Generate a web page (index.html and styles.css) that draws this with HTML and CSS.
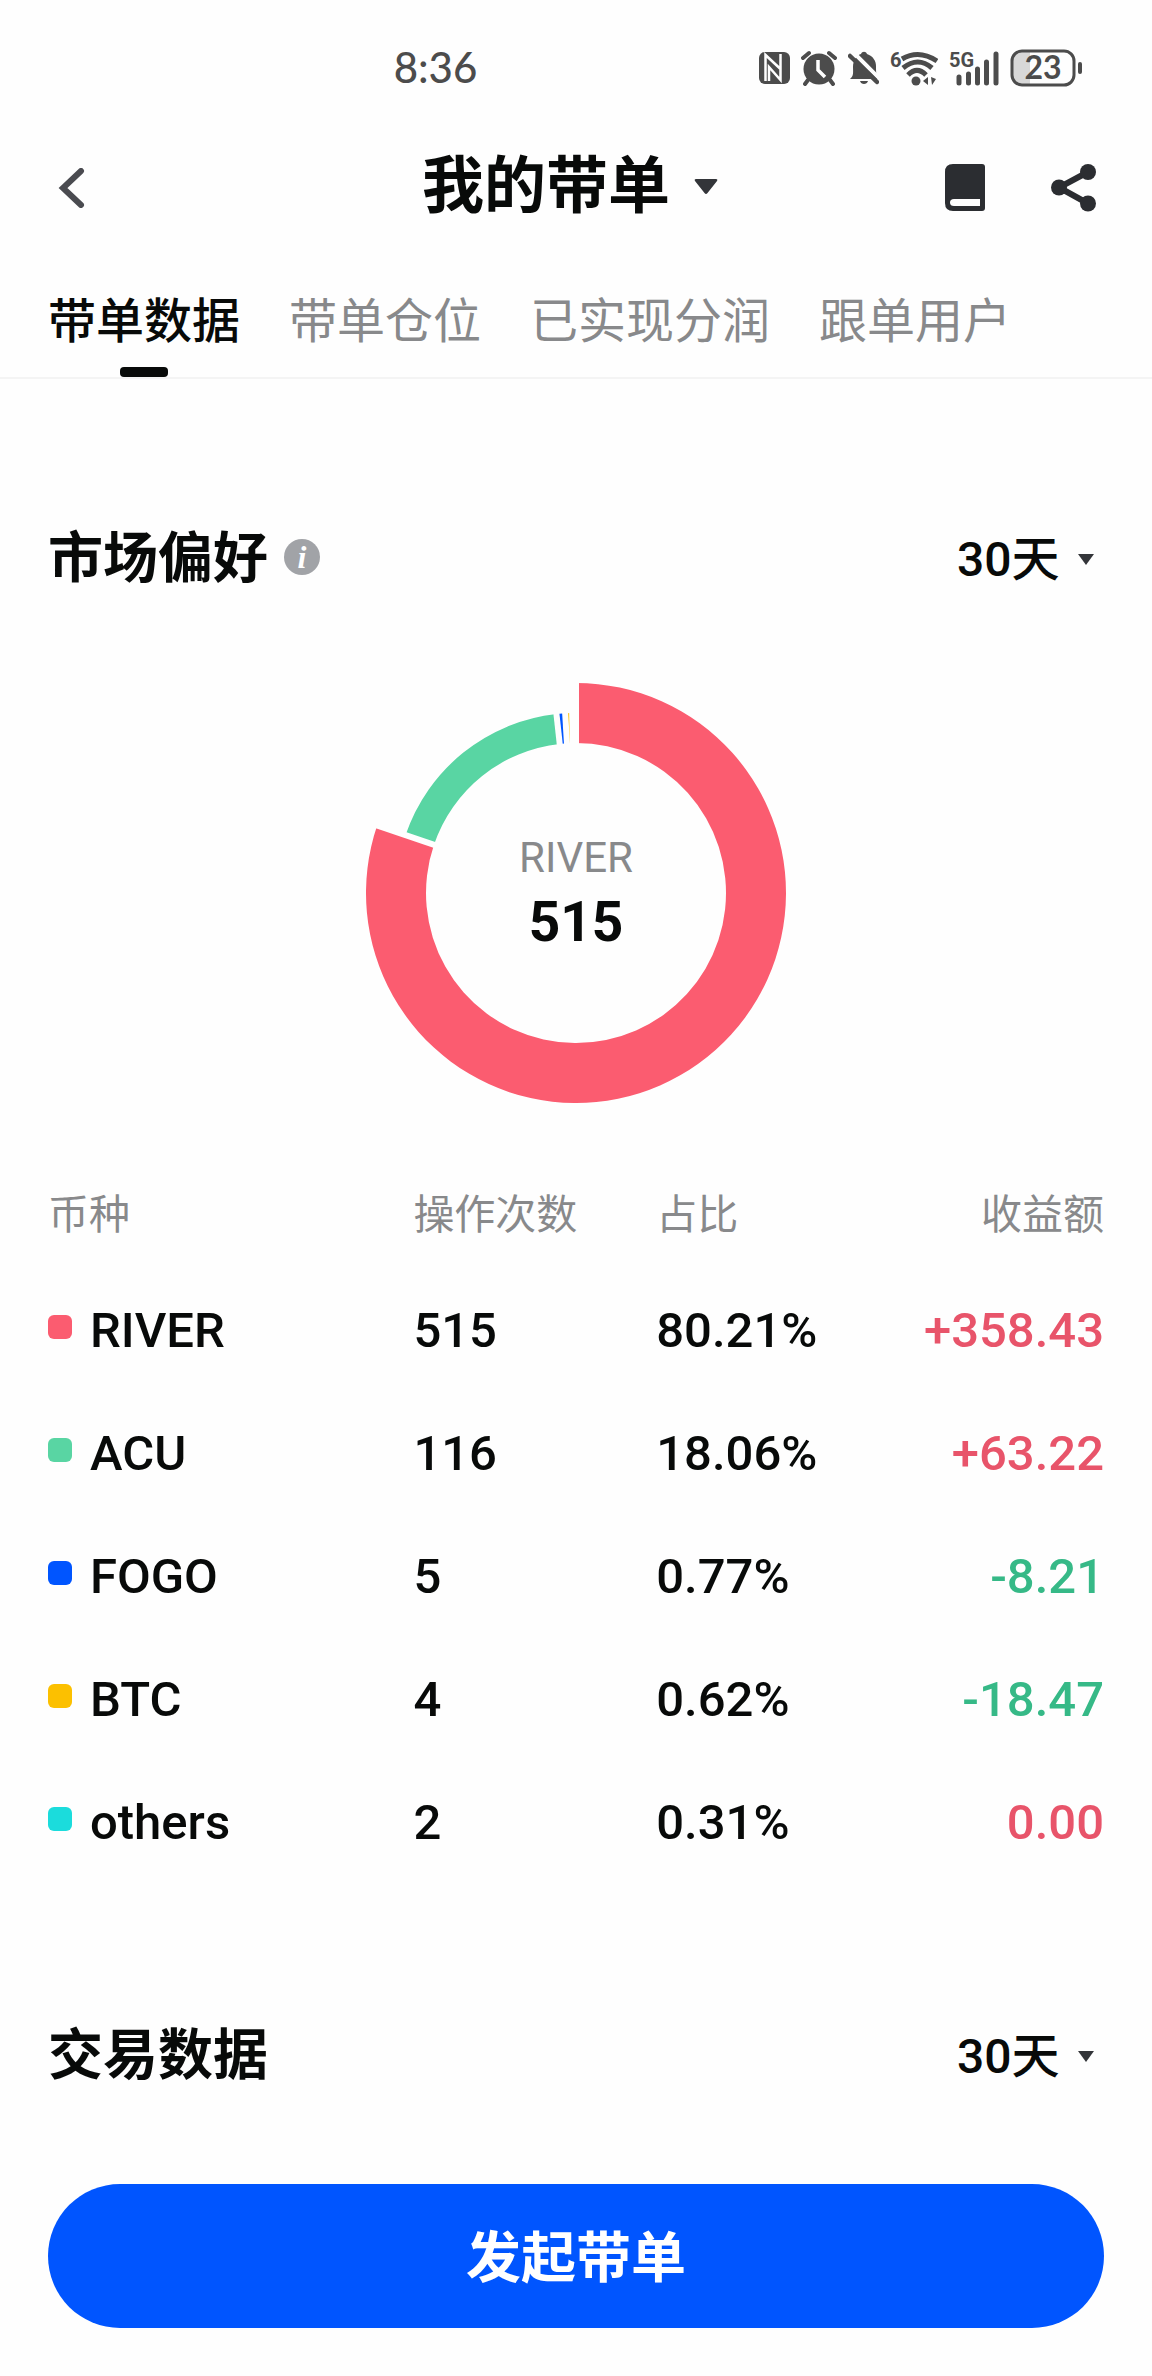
FILE: index.html
```html
<!DOCTYPE html>
<html lang="zh-CN">
  <head>
    <meta charset="UTF-8">
    <meta name="viewport" content="width=device-width, initial-scale=1.0">
    <title>我的带单</title>
    <link rel="stylesheet" href="styles.css">
  </head>
  <body>
    <div class="status-bar">
      <span class="status-time">8:36</span>
      <div class="status-icons">
        <!-- nfc -->
        <svg width="31" height="36" viewBox="0 0 31 36">
          <rect x="0" y="2" width="31" height="32" rx="6" fill="#4c4c4c" />
          <path d="M6.500 31V5l15 14M21.500 4v26L10 17v14" fill="none" stroke="#fefefe" stroke-width="2.500" />
        </svg>
        <!-- alarm -->
        <svg width="36" height="36" viewBox="0 0 36 36">
          <circle cx="18" cy="19" r="15.500" fill="#4c4c4c" />
          <path d="M2 8l6-5M28 3l6 5M7 30l-3 4M29 30l3 4" fill="none" stroke="#4c4c4c" stroke-width="4" stroke-linecap="round" />
          <path d="M17 10v10l7 7" fill="none" stroke="#fefefe" stroke-width="3.500" />
        </svg>
        <!-- muted bell -->
        <svg width="31" height="36" viewBox="0 0 31 36">
          <path d="M2 29c4-3 3-7 3-12C5 10 9 5 13 4c1-3 5-3 6 0 6 2 9 7 9 12 0 6 0 10 3 13zM12 31h8c-1 4-7 4-8 0z" fill="#4c4c4c" />
          <path d="M1 -2L34 31" stroke="#fefefe" stroke-width="4" />
          <path d="M2 6l27 26" stroke="#4c4c4c" stroke-width="4.500" stroke-linecap="round" />
        </svg>
        <!-- wifi 6 -->
        <svg width="48" height="42" viewBox="0 -3 48 42">
          <text class="tiny-label" x="0" y="17">6</text>
          <g fill="none" stroke="#4c4c4c" stroke-width="5">
            <path d="M12 9Q29-1 47 11" />
            <path d="M13 18Q28 6 42 18" />
            <path d="M18 25Q27 16 36 25" />
          </g>
          <circle cx="26" cy="31" r="4.500" fill="#4c4c4c" />
          <path d="M38 27v8l-5-4zM41 27l5 2-4 6z" fill="#4c4c4c" />
        </svg>
        <!-- 5G signal -->
        <svg width="50" height="42" viewBox="0 -3 50 42">
          <text class="tiny-label" x="0" y="17">5G</text>
          <path d="M10 27v6M19.500 24v9M28.500 19v14M37.500 12v21M47 4v29" stroke="#4c4c4c" stroke-width="5" stroke-linecap="round" />
        </svg>
        <!-- battery -->
        <svg width="74" height="46" viewBox="0 -4 74 46">
          <path d="M20 2v34H12C5 36 2 32 2 27V11C2 5 6 2 12 2z" fill="#d8d8d8" />
          <rect x="2" y="2" width="62" height="34" rx="10" fill="none" stroke="#4c4c4c" stroke-width="3" />
          <rect x="68" y="13" width="4" height="12" rx="2" fill="#4c4c4c" />
          <text class="battery-label" x="33" y="30">23</text>
        </svg>
      </div>
    </div>

    <header class="header">
      <button class="icon-btn" aria-label="返回">
        <svg width="30" height="40" viewBox="0 0 30 40">
          <path d="M26 3L8 20l18 17" fill="none" stroke="#4a4b50" stroke-width="6" stroke-linecap="round" />
        </svg>
      </button>
      <h1 class="title">
        <button class="title-btn">
          我的带单
          <svg width="24" height="16" viewBox="0 0 24 16">
            <path d="M2 0h20q2 0 1 2L13.500 14q-1.500 2-3 0L1 2q-1-2 1-2z" fill="#333539" />
          </svg>
        </button>
      </h1>
      <div class="header-actions">
        <button class="icon-btn" aria-label="教程">
          <svg width="40" height="48" viewBox="0 0 40 48">
            <path d="M8 0h29q3 0 3 3v41q0 3-3 3H8q-8 0-8-8V8q0-8 8-8z" fill="#2b2d31" />
            <path d="M35 35v7H9q-4 0-4-3.500T9 35z" fill="#fefefe" />
          </svg>
        </button>
        <button class="icon-btn" aria-label="分享">
          <svg width="46" height="48" viewBox="0 0 46 48">
            <path d="M37 8L8 23.500 37 39.500" fill="none" stroke="#2b2d31" stroke-width="6" />
            <circle cx="8" cy="23.500" r="8" fill="#2b2d31" />
            <circle cx="37" cy="8" r="8" fill="#2b2d31" />
            <circle cx="37" cy="39.500" r="8" fill="#2b2d31" />
          </svg>
        </button>
      </div>
    </header>

    <nav class="tabs">
      <a class="tab active" href="#data">带单数据</a>
      <a class="tab" href="#positions">带单仓位</a>
      <a class="tab" href="#profit">已实现分润</a>
      <a class="tab" href="#followers">跟单用户</a>
    </nav>

    <main class="content" id="data">
      <section class="preference">
        <div class="section-head">
          <h2>市场偏好</h2>
          <button class="info-btn" aria-label="说明">i</button>
          <label class="period">
            <select aria-label="市场偏好时间范围">
              <option>30天</option>
              <option>90天</option>
            </select>
            <svg width="16" height="11" viewBox="0 0 16 11">
              <path d="M0 0h16L8 11z" fill="#333539" />
            </svg>
          </label>
        </div>

        <div class="chart">
          <svg width="420" height="420" viewBox="0 0 420 420">
            <path d="M210 0A210 210 0 1 1 11.150 142.480L67.970 161.770A150 150 0 1 0 210 60z" fill="#fb5c70" />
            <path d="M39.560 152.120A180 180 0 0 1 190.470 31.060L193.730 60.890A150 150 0 0 0 67.970 161.770z" fill="#59d5a3" />
            <path d="M190.470 31.060L199.150 30.330 200.960 60.270 193.730 60.890z" fill="#0055ff" />
            <path d="M199.150 30.330L206.160 30.040 206.800 60.030 200.960 60.270z" fill="#fcc000" />
            <!-- gaps between the slices -->
            <g stroke="#fefefe" stroke-width="6">
              <path d="M210 65V-5" />
              <path d="M72.700 163.380L6.420 140.870" />
              <path d="M194.270 65.860L189.930 26.090" />
              <path d="M201.260 65.260L198.850 25.340" />
              <path d="M206.900 65.030L206.050 25.040" />
            </g>
          </svg>
          <div class="chart-label">
            <span class="chart-name">RIVER</span>
            <strong class="chart-value">515</strong>
          </div>
        </div>

        <table class="coins">
          <thead>
            <tr>
              <th class="col-coin">币种</th>
              <th class="col-count">操作次数</th>
              <th class="col-share">占比</th>
              <th class="col-profit">收益额</th>
            </tr>
          </thead>
          <tbody>
            <tr>
              <td><div class="coin"><span class="dot red"></span>RIVER</div></td>
              <td>515</td>
              <td>80.21%</td>
              <td class="up">+358.43</td>
            </tr>
            <tr>
              <td><div class="coin"><span class="dot green"></span>ACU</div></td>
              <td>116</td>
              <td>18.06%</td>
              <td class="up">+63.22</td>
            </tr>
            <tr>
              <td><div class="coin"><span class="dot blue"></span>FOGO</div></td>
              <td>5</td>
              <td>0.77%</td>
              <td class="down">-8.21</td>
            </tr>
            <tr>
              <td><div class="coin"><span class="dot yellow"></span>BTC</div></td>
              <td>4</td>
              <td>0.62%</td>
              <td class="down">-18.47</td>
            </tr>
            <tr>
              <td><div class="coin"><span class="dot cyan"></span>others</div></td>
              <td>2</td>
              <td>0.31%</td>
              <td class="up">0.00</td>
            </tr>
          </tbody>
        </table>
      </section>

      <section class="trading">
        <div class="section-head">
          <h2>交易数据</h2>
          <label class="period">
            <select aria-label="交易数据时间范围">
              <option>30天</option>
              <option>90天</option>
            </select>
            <svg width="16" height="11" viewBox="0 0 16 11">
              <path d="M0 0h16L8 11z" fill="#333539" />
            </svg>
          </label>
        </div>
      </section>

      <button class="start-btn">发起带单</button>
    </main>
  </body>
</html>
```

FILE: styles.css
```css
:root {
  --bg-color: #fefefe;
  --text-color: #080a09;
  --muted-color: #88898b;
  --status-color: #4c4c4c;
  --primary-color: #0055ff;
  --up-color: #e8546a;
  --down-color: #36b987;
}

* {
  box-sizing: border-box;
}

body {
  margin: 0;
  background-color: var(--bg-color);
  color: var(--text-color);
  font-family: Roboto, "Noto Sans CJK SC", sans-serif;
  font-size: 48px;
}

svg {
  display: block;
  flex-shrink: 0;
}

button,
select {
  margin: 0;
  padding: 0;
  border: none;
  background: none;
  color: inherit;
  font: inherit;
  cursor: pointer;
}

/* status bar */
.status-bar {
  display: flex;
  justify-content: space-between;
  align-items: center;
  height: 136px;
  padding: 0 68px 0 34%;
  color: var(--status-color);
}

.status-time {
  padding: 0 0 2px 2px;
  font-family: Lato, sans-serif;
  font-size: 42px;
  font-weight: 500;
}

.status-icons {
  display: flex;
  align-items: center;
  gap: 11px;
}

.tiny-label {
  font-size: 20px;
  font-weight: 700;
  fill: var(--status-color);
}

.battery-label {
  font-family: Lato, sans-serif;
  font-size: 32px;
  font-weight: 700;
  text-anchor: middle;
  fill: var(--status-color);
}

/* header */
.header {
  display: grid;
  grid-template-columns: 1fr auto 1fr;
  align-items: center;
  height: 104px;
  padding: 0 55px;
}

.title {
  margin: 0;
  font-size: 62px;
  font-weight: 700;
  line-height: 64px;
}

.title-btn {
  display: flex;
  align-items: center;
  gap: 24px;
  padding: 0 12px 2px 0;
}

.icon-btn {
  justify-self: start;
}

.header-actions {
  display: flex;
  justify-content: flex-end;
  gap: 66px;
}

/* tabs */
.tabs {
  display: flex;
  gap: 49px;
  padding: 54px 48px 0;
  border-bottom: 2px solid #f4f4f4;
}

.tab {
  position: relative;
  padding-bottom: 27px;
  color: var(--muted-color);
  line-height: 56px;
  text-decoration: none;
  white-space: nowrap;
}

.tab.active {
  color: var(--text-color);
  font-weight: 500;
}

.tab.active::after {
  content: "";
  position: absolute;
  bottom: 0;
  left: 50%;
  width: 48px;
  height: 10px;
  margin-left: -24px;
  border-radius: 4px;
  background-color: var(--text-color);
}

/* content */
.content {
  padding: 0 48px 48px;
}

.preference {
  padding-top: 148px;
}

.trading {
  padding-top: 140px;
}

.section-head {
  display: flex;
  align-items: center;
  height: 64px;
}

.section-head h2 {
  margin: 0 0 2px;
  font-size: 55px;
  font-weight: 700;
  line-height: 64px;
}

.info-btn {
  width: 36px;
  height: 36px;
  margin: 0 0 4px 16px;
  border-radius: 50%;
  background-color: #a1a3a7;
  color: #fff;
  font-family: "Liberation Serif", serif;
  font-size: 32px;
  font-style: italic;
  font-weight: 700;
  line-height: 34px;
}

.period {
  display: flex;
  align-items: center;
  gap: 18px;
  margin-left: auto;
  padding-right: 10px;
}

.period select {
  appearance: none;
  height: 64px;
  font-weight: 500;
}

/* chart */
.chart {
  position: relative;
  display: flex;
  justify-content: center;
  margin-top: 92px;
}

.chart-label {
  position: absolute;
  inset: 0;
  display: flex;
  flex-direction: column;
  align-items: center;
  justify-content: center;
  padding-bottom: 6px;
}

.chart-name {
  color: var(--muted-color);
  font-size: 42px;
  line-height: 64px;
}

.chart-value {
  font-size: 55px;
  line-height: 64px;
}

/* coin table */
.coins {
  width: 100%;
  margin-top: 58px;
  border-collapse: collapse;
  table-layout: fixed;
}

.coins th {
  height: 108px;
  padding: 0;
  color: var(--muted-color);
  font-size: 41px;
  font-weight: 400;
  line-height: 48px;
  text-align: left;
}

.coins td {
  height: 123px;
  padding: 0;
  font-size: 49px;
  font-weight: 500;
  line-height: 56px;
}

.coins .col-coin {
  width: 34.6%;
}

.coins .col-count {
  width: 23%;
}

.coins .col-share {
  width: 20%;
}

.coins th:last-child,
.coins td:last-child {
  text-align: right;
}

.coin {
  display: flex;
  align-items: center;
  gap: 18px;
}

.dot {
  width: 24px;
  height: 24px;
  margin-bottom: 8px;
  border-radius: 6px;
}

.red {
  background-color: #fb5c70;
}

.green {
  background-color: #59d5a3;
}

.blue {
  background-color: #0055ff;
}

.yellow {
  background-color: #fcc000;
}

.cyan {
  background-color: #1bdcdc;
}

.coins .up {
  color: var(--up-color);
}

.coins .down {
  color: var(--down-color);
}

.start-btn {
  display: block;
  width: 100%;
  height: 144px;
  margin-top: 96px;
  padding-bottom: 6px;
  border-radius: 72px;
  background-color: var(--primary-color);
  color: #fff;
  font-size: 55px;
  font-weight: 700;
}
```
